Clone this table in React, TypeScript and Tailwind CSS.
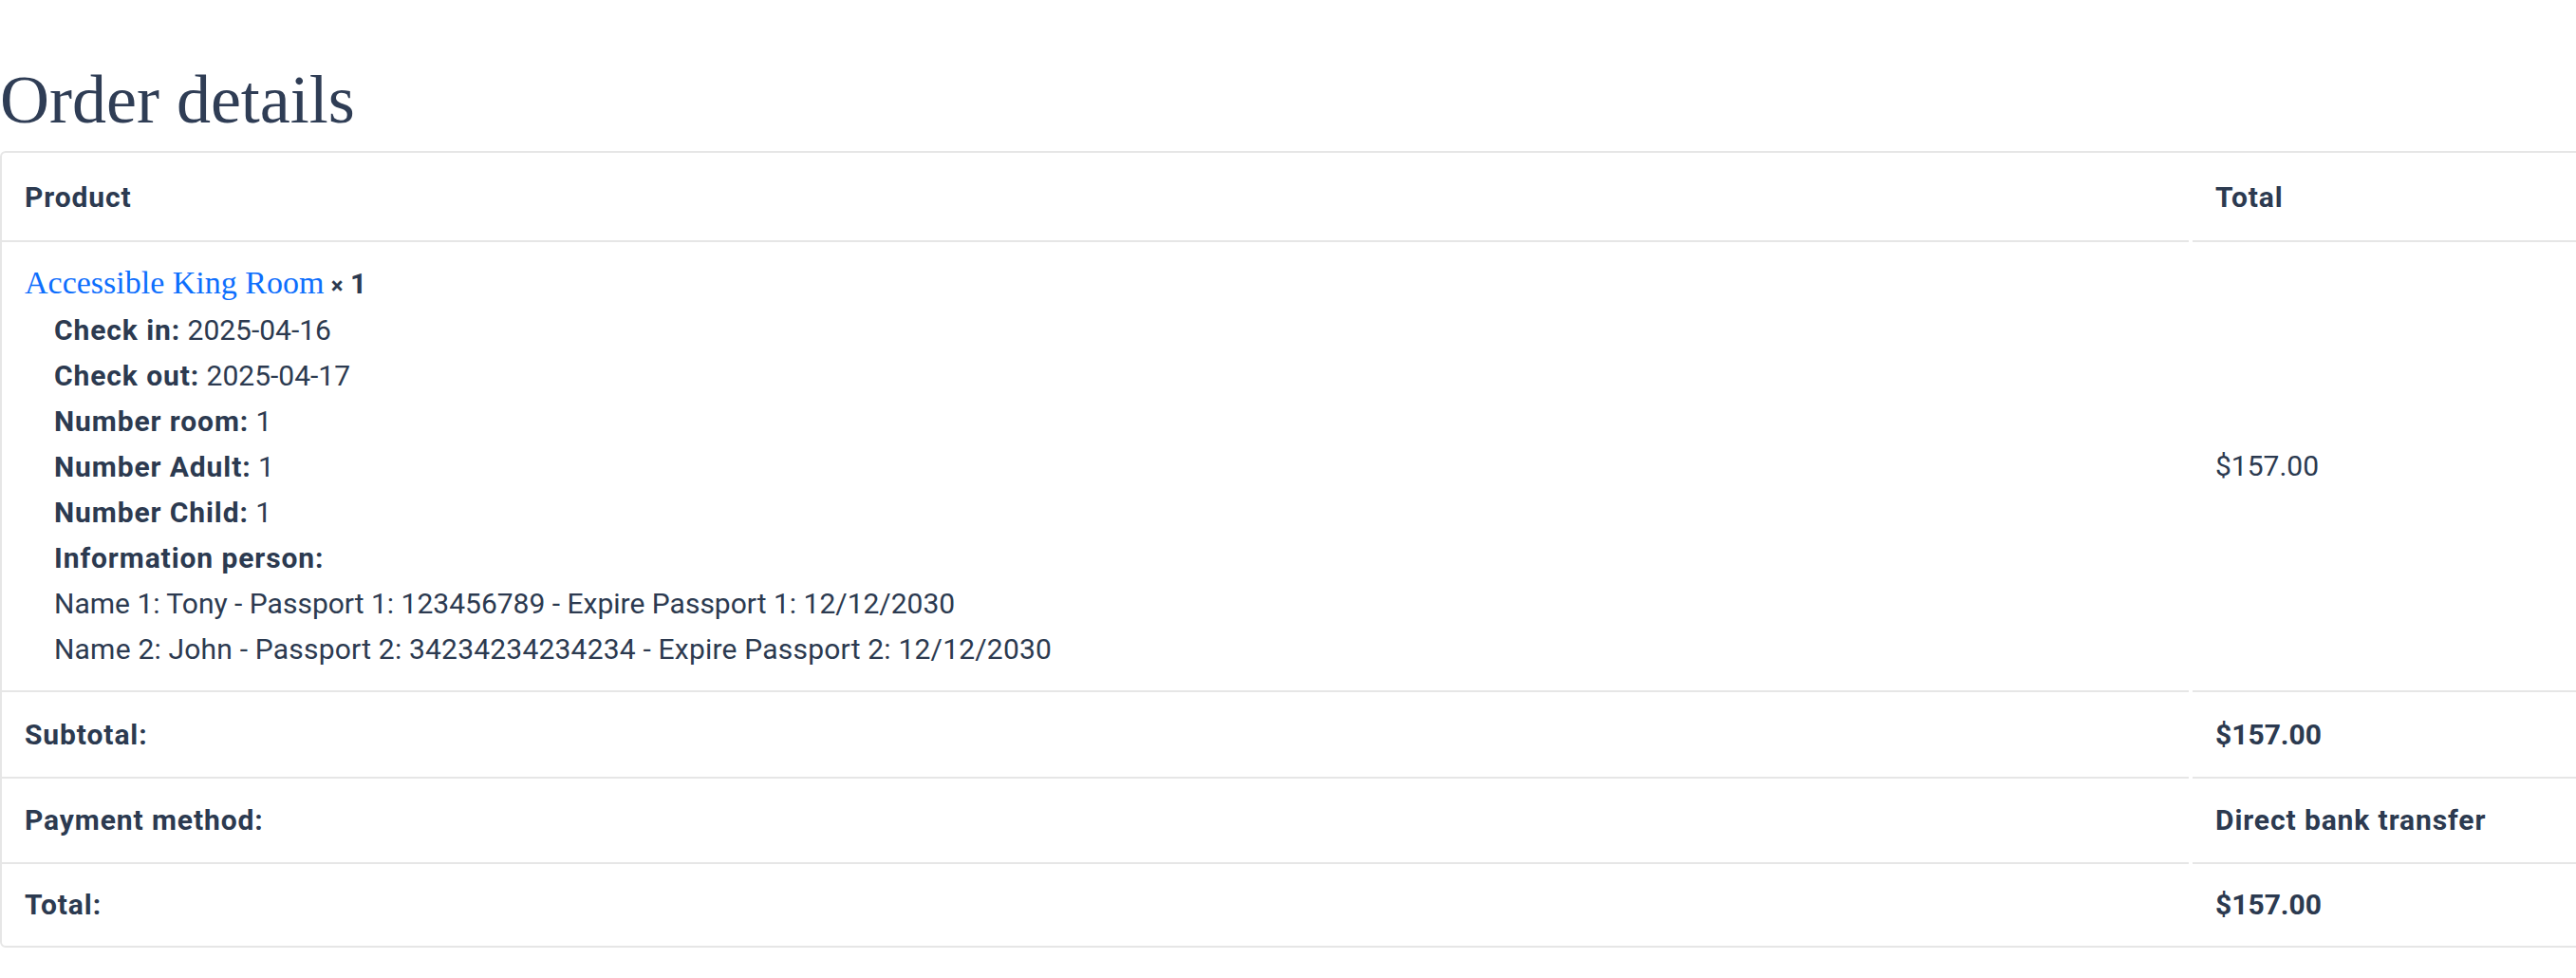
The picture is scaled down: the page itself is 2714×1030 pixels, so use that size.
import React from "react";

const sans = { fontFamily: "Roboto, 'Liberation Sans', sans-serif" };

function MetaLine({ label, value }: { label: string; value?: string }) {
  return (
    <div>
      <strong className="font-bold tracking-[0.9px]">{label}</strong>
      {value !== undefined ? <span> {value}</span> : null}
    </div>
  );
}

function Row({
  h,
  left,
  right,
  rightTrack = "tracking-[0.9px]",
}: {
  h: string;
  left: string;
  right: string;
  rightTrack?: string;
}) {
  const base = "border-t-2 border-[#e6e6e6] pl-[24px] flex items-center font-bold ";
  return (
    <div className={"grid grid-cols-[2304px_1fr] gap-x-[4px] " + h}>
      <div className={base + "tracking-[0.9px]"}>{left}</div>
      <div className={base + rightTrack}>{right}</div>
    </div>
  );
}

export default function App() {
  return (
    <div
      className="w-[2714px] h-[1030px] overflow-hidden bg-white text-[#2c3a50] text-[30px] leading-[48px]"
      style={sans}
    >
      <h2
        className="pt-[63px] text-[72px] leading-[84px] font-normal text-[#2f3d55]"
        style={{ fontFamily: "'Liberation Serif', 'DejaVu Serif', serif" }}
      >
        Order details
      </h2>
      <div className="mt-[12px] w-[2800px] border-2 border-[#e6e6e6] rounded-[6px]">
        <div className="grid grid-cols-[2304px_1fr] gap-x-[4px] h-[92px]">
          <div className="flex items-center pl-[24px] pt-[2px] font-bold tracking-[0.9px]">Product</div>
          <div className="flex items-center pl-[24px] pt-[2px] font-bold tracking-[0.9px]">Total</div>
        </div>
        <div className="grid grid-cols-[2304px_1fr] gap-x-[4px]">
          <div className="border-t-2 border-[#e6e6e6] pl-[24px] pt-[20px] pb-[19px]">
            <div className="leading-[46px]">
              <a
                href="#"
                className="text-[34px] text-[#0d6efd]"
                style={{ fontFamily: "'Liberation Serif', 'DejaVu Serif', serif" }}
              >
                Accessible King Room
              </a>{" "}
              <strong className="font-bold">
                <span className="text-[24px]">×</span>&nbsp;1
              </strong>
            </div>
            <div className="ml-[31px]">
              <MetaLine label="Check in:" value="2025-04-16" />
              <MetaLine label="Check out:" value="2025-04-17" />
              <MetaLine label="Number room:" value="1" />
              <MetaLine label="Number Adult:" value="1" />
              <MetaLine label="Number Child:" value="1" />
              <MetaLine label="Information person:" />
              <div>Name 1: Tony - Passport 1: 123456789 - Expire Passport 1: 12/12/2030</div>
              <div className="tracking-[0.2px]">Name 2: John - Passport 2: 34234234234234 - Expire Passport 2: 12/12/2030</div>
            </div>
          </div>
          <div className="border-t-2 border-[#e6e6e6] pl-[24px] flex items-center">$157.00</div>
        </div>
        <Row h="h-[91px]" left="Subtotal:" right="$157.00" rightTrack="tracking-[0px]" />
        <Row h="h-[90px]" left="Payment method:" right="Direct bank transfer" />
        <Row h="h-[88px]" left="Total:" right="$157.00" rightTrack="tracking-[0px]" />
      </div>
    </div>
  );
}
